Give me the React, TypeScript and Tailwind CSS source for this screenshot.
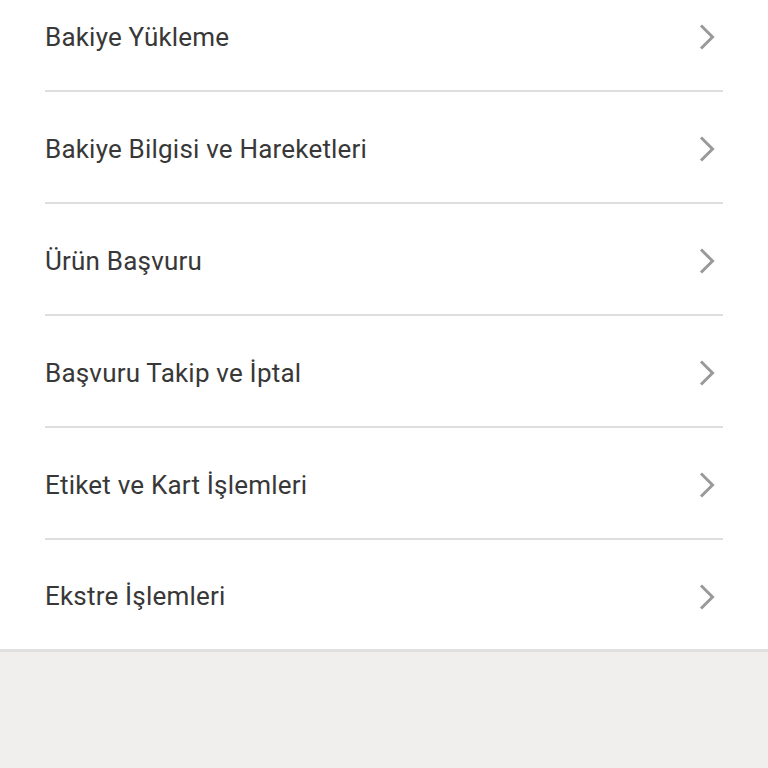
const items = [
  'Bakiye Yükleme',
  'Bakiye Bilgisi ve Hareketleri',
  'Ürün Başvuru',
  'Başvuru Takip ve İptal',
  'Etiket ve Kart İşlemleri',
  'Ekstre İşlemleri',
];

function Chevron() {
  return (
    <svg width="18" height="28" viewBox="0 0 18 28" fill="none" className="shrink-0">
      <path d="M3 2.5 L14.5 14 L3 25.5" stroke="#9a9a9a" strokeWidth="3" strokeLinecap="butt" />
    </svg>
  );
}

export default function App() {
  return (
    <div className="h-[768px] w-[768px] overflow-hidden bg-[#f0efee] font-['Roboto',sans-serif]">
      <div className="border-b-[3px] border-[#e0e0e0] bg-white">
        <ul className="-mt-[20px]">
          {items.map((label, i) => {
            const last = i === items.length - 1;
            return (
              <li key={label} className="px-[45px]">
                <button
                  type="button"
                  className={`flex w-full items-center justify-between text-left ${last ? 'h-[109px]' : 'h-[112px] border-b-2 border-[#dedede]'}`}
                >
                  <span className="pt-[4px] text-[26px] tracking-[0.2px] text-[#383838]">{label}</span>
                  <span className="mr-[7px] pt-[4px]">
                    <Chevron />
                  </span>
                </button>
              </li>
            );
          })}
        </ul>
      </div>
    </div>
  );
}
